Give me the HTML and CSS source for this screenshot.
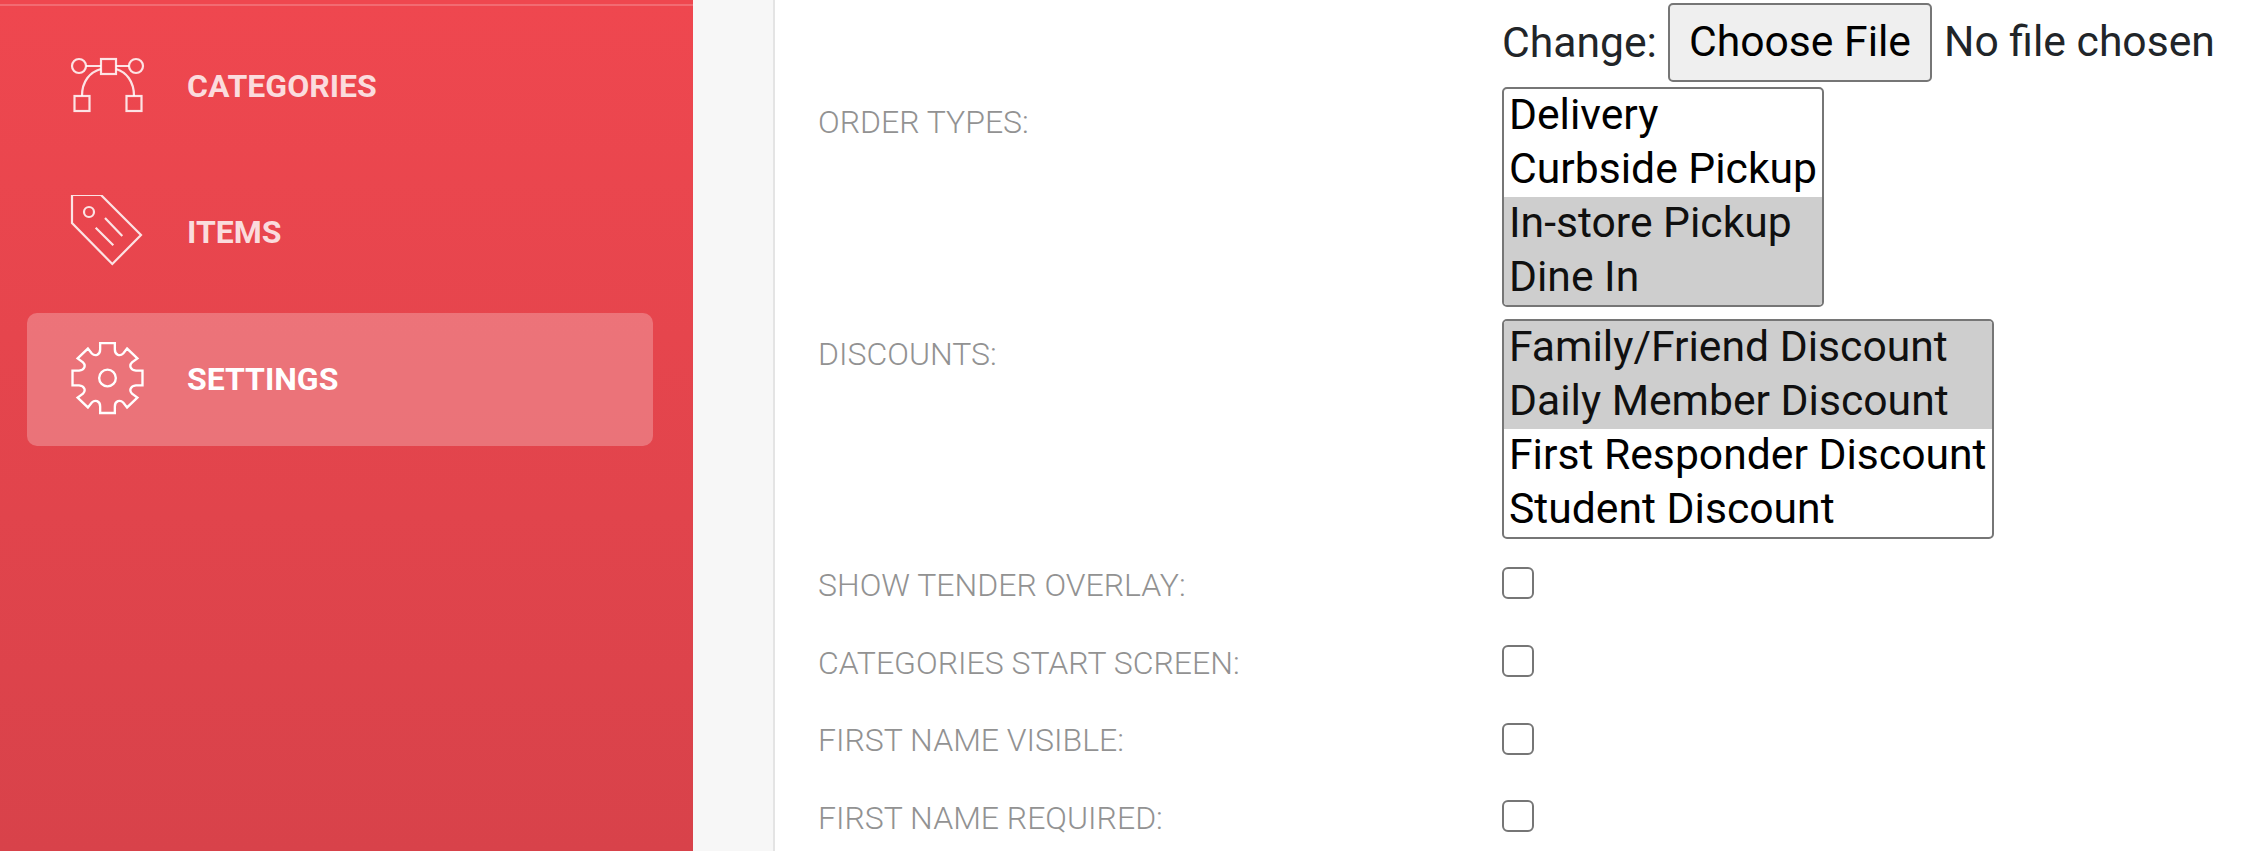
FILE: index.html
```html
<!DOCTYPE html>
<html lang="en">
<head>
  <meta charset="UTF-8">
  <meta name="viewport" content="width=device-width, initial-scale=1.0">
  <title>Settings</title>
  <link rel="stylesheet" href="styles.css">
</head>
<body>
  <div class="page">
    <aside class="sidebar">
      <nav class="nav">
        <a class="nav-item" href="#">
          <svg class="nav-icon" viewBox="0 0 76 76">
            <circle cx="9" cy="17" r="7"/>
            <rect x="31" y="10" width="15" height="15"/>
            <circle cx="66" cy="17" r="7"/>
            <path d="M16 17H31M46 17H59"/>
            <rect x="4.5" y="47" width="15" height="15"/>
            <rect x="56.5" y="47" width="15" height="15"/>
            <path d="M12 47C12 32 20 23 31 20M64 47C64 32 56 23 46 20"/>
          </svg>
          <span class="nav-text">CATEGORIES</span>
        </a>
        <a class="nav-item" href="#">
          <svg class="nav-icon" viewBox="0 0 76 76">
            <path d="M2 0H31L71 40L42.3 69L2 28Z"/>
            <circle cx="19" cy="17" r="5"/>
            <path d="M35 23L52.3 41M25.7 32.7L43.3 50.3"/>
          </svg>
          <span class="nav-text">ITEMS</span>
        </a>
        <a class="nav-item active" href="#">
          <svg class="nav-icon" viewBox="0 0 76 76">
            <g transform="translate(37.5 36) scale(0.98)">
              <path d="M-7.5-35.7H7.5V-29C7.5-23 13-22 16-25L20-30L30.5-20L25-16C22-13 23-8 29-7.5H35.7V7.5H29C23 8 22 13 25 16L30.5 20L20 30L16 25C13 22 7.5 23 7.5 29V35.7H-7.5V29C-7.5 23-13 22-16 25L-20 30L-30.5 20L-25 16C-22 13-23 8-29 7.5H-35.7V-7.5H-29C-23-8-22-13-25-16L-30.5-20L-20-30L-16-25C-13-22-7.5-23-7.5-29Z"/>
              <circle r="8.5"/>
            </g>
          </svg>
          <span class="nav-text">SETTINGS</span>
        </a>
      </nav>
    </aside>
    <div class="gutter"></div>
    <main class="content">
      <form class="settings-form">
        <div class="form-row file-row">
          <div class="row-label"></div>
          <div class="row-value">
            <span class="change-label">Change:</span>
            <input type="file" class="file-input">
          </div>
        </div>
        <div class="form-row select-row">
          <label class="row-label select-label">ORDER TYPES:</label>
          <div class="row-value">
            <select class="list-select" multiple size="4">
              <option>Delivery</option>
              <option>Curbside Pickup</option>
              <option selected>In-store Pickup</option>
              <option selected>Dine In</option>
            </select>
          </div>
        </div>
        <div class="form-row select-row">
          <label class="row-label select-label">DISCOUNTS:</label>
          <div class="row-value">
            <select class="list-select" multiple size="4">
              <option selected>Family/Friend Discount</option>
              <option selected>Daily Member Discount</option>
              <option>First Responder Discount</option>
              <option>Student Discount</option>
            </select>
          </div>
        </div>
        <div class="form-row check-row">
          <label class="row-label">SHOW TENDER OVERLAY:</label>
          <div class="row-value"><input type="checkbox" class="check"></div>
        </div>
        <div class="form-row check-row">
          <label class="row-label">CATEGORIES START SCREEN:</label>
          <div class="row-value"><input type="checkbox" class="check"></div>
        </div>
        <div class="form-row check-row">
          <label class="row-label">FIRST NAME VISIBLE:</label>
          <div class="row-value"><input type="checkbox" class="check"></div>
        </div>
        <div class="form-row check-row">
          <label class="row-label">FIRST NAME REQUIRED:</label>
          <div class="row-value"><input type="checkbox" class="check"></div>
        </div>
      </form>
    </main>
  </div>
</body>
</html>
```

FILE: styles.css
```css
html, body {
  height: 100%;
}

body {
  margin: 0;
  overflow: hidden;
  font-family: Roboto, "Liberation Sans", sans-serif;
  background-color: #fff;
}

.page {
  display: flex;
  height: 851px;
}

.sidebar {
  width: 693px;
  flex-shrink: 0;
  box-sizing: border-box;
  padding-top: 4px;
  background: linear-gradient(180deg, #ef474f 0%, #d8424a 100%);
}

.nav {
  border-top: 2px solid rgba(255, 255, 255, 0.2);
  padding: 14px 40px 0 27px;
}

.nav-item {
  display: flex;
  align-items: center;
  gap: 41px;
  box-sizing: border-box;
  height: 133px;
  margin-bottom: 13.5px;
  padding-left: 43px;
  border-radius: 10px;
  color: rgba(255, 255, 255, 0.82);
  font-size: 32px;
  font-weight: 700;
  text-decoration: none;
}

.nav-text {
  margin-bottom: 2px;
}

.nav-item.active {
  background-color: rgba(255, 255, 255, 0.25);
  color: #fff;
}

.nav-icon {
  width: 76px;
  height: 76px;
  fill: none;
  stroke: rgba(255, 255, 255, 0.85);
  stroke-width: 2.2;
}

.active .nav-icon {
  stroke: #fff;
  stroke-width: 2.4;
}

.gutter {
  width: 80px;
  flex-shrink: 0;
  background-color: #f7f7f7;
  border-right: 2px solid #e4e4e4;
}

.content {
  flex: 1;
  padding: 3px 0 0 43px;
}

.form-row {
  display: flex;
  margin-bottom: 13px;
}

.file-row {
  margin-bottom: 5px;
}

.select-row {
  margin-bottom: 12.5px;
}

.row-label {
  width: 684px;
  flex-shrink: 0;
  color: #929292;
  font-size: 32px;
  font-weight: 300;
}

.select-label {
  padding-top: 16px;
}

.check-row {
  height: 64.7px;
  align-items: center;
}

.check-row .row-label {
  padding-top: 3px;
}

.row-value {
  display: flex;
  align-items: center;
}

.change-label {
  color: #212529;
  font-size: 42.67px;
  margin-right: 11px;
  margin-bottom: 2px;
}

.file-input {
  color: #212529;
  font-family: inherit;
  font-size: 42.67px;
  width: 560px;
}

.file-input::file-selector-button {
  height: 79px;
  padding: 0 19px 3px;
  margin-right: 12px;
  border: 2px solid #767676;
  border-radius: 5px;
  background-color: #efefef;
  color: #000;
  font-family: inherit;
  font-size: 42.67px;
}

.list-select {
  display: block;
  box-sizing: border-box;
  height: 219.5px;
  padding: 0;
  border: 2px solid #767676;
  border-radius: 5px;
  background-color: #fff;
  color: #000;
  font-family: inherit;
  font-size: 42.67px;
  overflow: hidden;
  scrollbar-width: none;
}

.list-select option {
  padding: 0 5px 4px;
  height: 50px;
  line-height: 50px;
  min-height: 0;
}

.check {
  appearance: none;
  width: 32px;
  height: 32px;
  margin: 0;
  border: 2px solid #767676;
  border-radius: 6px;
  background-color: #fff;
}
```
